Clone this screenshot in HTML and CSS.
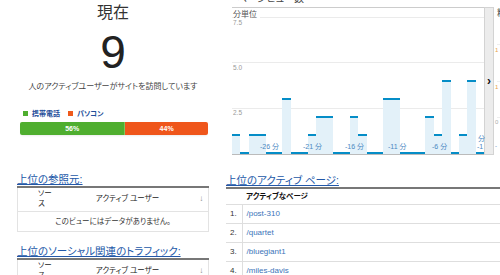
FILE: index.html
```html
<!DOCTYPE html>
<html lang="ja">
<head>
  <meta charset="utf-8">
  <title>リアルタイム - サマリー</title>
  <link rel="stylesheet" href="styles.css">
</head>
<body>
  <div class="page">
    <section class="overview">
      <h1 class="now-title">現在</h1>
      <div class="now-count">9</div>
      <p class="now-text">人のアクティブユーザーがサイトを訪問しています</p>
      <ul class="legend">
        <li><span class="swatch mobile"></span>携帯電話</li>
        <li><span class="swatch desktop"></span>パソコン</li>
      </ul>
      <div class="split">
        <div class="split-part mobile" style="width: 56%">56%</div>
        <div class="split-part desktop" style="width: 44%">44%</div>
      </div>

      <h2 class="block-title"><a>上位の参照元:</a></h2>
      <table class="grid">
        <thead>
          <tr><th class="col-src">ソース</th><th class="col-users">アクティブ ユーザー</th><th class="col-sort">↓</th></tr>
        </thead>
        <tbody>
          <tr><td colspan="3" class="empty">このビューにはデータがありません。</td></tr>
        </tbody>
      </table>

      <h2 class="block-title social"><a>上位のソーシャル関連のトラフィック:</a></h2>
      <table class="grid">
        <thead>
          <tr><th class="col-src">ソース</th><th class="col-users">アクティブ ユーザー</th><th class="col-sort">↓</th></tr>
        </thead>
      </table>
    </section>

    <section class="realtime">
      <div class="chart-title">ページビュー数</div>
      <div class="chart-box">
        <div class="plot">
          <div class="gridline" style="top: 9px"></div>
          <div class="gridline" style="top: 54px"></div>
          <div class="gridline" style="top: 100px"></div>
          <div class="bars">
            <div class="bar" style="height: 20px"></div>
            <div class="bar" style="height: 2px"></div>
            <div class="bar" style="height: 20px"></div>
            <div class="bar" style="height: 20px"></div>
            <div class="bar" style="height: 2px"></div>
            <div class="bar" style="height: 2px"></div>
            <div class="bar" style="height: 56px"></div>
            <div class="bar" style="height: 2px"></div>
            <div class="bar" style="height: 2px"></div>
            <div class="bar" style="height: 20px"></div>
            <div class="bar" style="height: 38px"></div>
            <div class="bar" style="height: 38px"></div>
            <div class="bar" style="height: 2px"></div>
            <div class="bar" style="height: 2px"></div>
            <div class="bar" style="height: 38px"></div>
            <div class="bar" style="height: 20px"></div>
            <div class="bar" style="height: 2px"></div>
            <div class="bar" style="height: 2px"></div>
            <div class="bar" style="height: 56px"></div>
            <div class="bar" style="height: 56px"></div>
            <div class="bar" style="height: 2px"></div>
            <div class="bar" style="height: 2px"></div>
            <div class="bar" style="height: 2px"></div>
            <div class="bar" style="height: 38px"></div>
            <div class="bar" style="height: 20px"></div>
            <div class="bar" style="height: 74px"></div>
            <div class="bar" style="height: 2px"></div>
            <div class="bar" style="height: 20px"></div>
            <div class="bar" style="height: 74px"></div>
            <div class="bar" style="height: 2px"></div>
          </div>
          <span class="unit">分単位</span>
          <span class="axis" style="top: 10px">7.5</span>
          <span class="axis" style="top: 55px">5.0</span>
          <span class="axis" style="top: 100px">2.5</span>
          <span class="tick" style="left: 28px">-26 分</span>
          <span class="tick" style="left: 71px">-21 分</span>
          <span class="tick" style="left: 113px">-16 分</span>
          <span class="tick" style="left: 156px">-11 分</span>
          <span class="tick" style="left: 200px">-6 分</span>
          <span class="tick tick-up" style="left: 246px">分</span>
          <span class="tick" style="left: 245px">-1</span>
        </div>
        <div class="pager">›</div>
        <div class="side">
          <span class="side-title">精</span>
          <div class="side-line" style="top: 37px"></div>
          <div class="side-line" style="top: 74px"></div>
          <div class="side-line" style="top: 110px"></div>
          <span class="side-num warm" style="top: 39px">1</span>
          <span class="side-num warm" style="top: 76px">1</span>
          <span class="side-num" style="top: 111px">0</span>
          <span class="side-num cool" style="top: 135px">-</span>
        </div>
      </div>

      <h2 class="block-title pages-title"><a>上位のアクティブ ページ:</a></h2>
      <table class="pages">
        <thead>
          <tr><th class="num"></th><th class="path">アクティブなページ</th></tr>
        </thead>
        <tbody>
          <tr><td class="num">1.</td><td class="path"><a>/post-310</a></td></tr>
          <tr><td class="num">2.</td><td class="path"><a>/quartet</a></td></tr>
          <tr><td class="num">3.</td><td class="path"><a>/bluegiant1</a></td></tr>
          <tr><td class="num">4.</td><td class="path"><a>/miles-davis</a></td></tr>
        </tbody>
      </table>
    </section>
  </div>
</body>
</html>
```

FILE: styles.css
```css
* {
  box-sizing: border-box;
}

body {
  margin: 0;
  width: 500px;
  height: 275px;
  overflow: hidden;
  background: #fff;
  color: #333;
  font: 9px/1.2 "Liberation Sans", "Noto Sans CJK JP", sans-serif;
  font-feature-settings: "palt";
}

.page {
  display: flex;
  height: 275px;
}

/* left column */

.overview {
  flex: none;
  width: 226px;
  padding: 0 17px;
}

.now-title {
  margin: 3px 0 0;
  font-size: 16px;
  line-height: 20px;
  font-weight: normal;
  text-align: center;
  color: #333;
}

.now-count {
  margin-top: 6px;
  font: 46px/46px "Liberation Sans", sans-serif;
  text-align: center;
  color: #222;
}

.now-text {
  margin: 6px 0 0;
  font-size: 8px;
  line-height: 11px;
  text-align: center;
  color: #444;
}

.legend {
  display: flex;
  gap: 8px;
  margin: 17px 0 0;
  padding: 0 0 0 6px;
  list-style: none;
  font-size: 7px;
  line-height: 9px;
  font-weight: bold;
  color: #1f4f9a;
}

.legend li {
  display: flex;
  align-items: center;
}

.swatch {
  width: 5px;
  height: 5px;
  margin-right: 4px;
}

.swatch.mobile {
  background: #4fae2f;
}

.swatch.desktop {
  background: #ef5a1c;
}

.split {
  display: flex;
  height: 13px;
  margin: 4px 1px 0 3px;
  border-radius: 2px;
  overflow: hidden;
  box-shadow: 0 2px 2px -1px rgba(0, 0, 0, 0.08);
}

.split-part {
  color: #fff;
  font-size: 7px;
  line-height: 13px;
  font-weight: bold;
  text-align: center;
}

.split-part.mobile {
  background: #4fae2f;
  border-right: 1px solid #7cc65f;
}

.split-part.desktop {
  background: #ef561b;
}

.block-title {
  margin: 37px 0 0;
  font-size: 10.5px;
  line-height: 14px;
  font-weight: normal;
}

.block-title a {
  color: #2358a8;
  text-decoration: underline;
}

.block-title.social {
  margin-top: 12px;
}

.grid {
  width: 100%;
  border-collapse: collapse;
  border-top: 2px solid #777;
}

.grid th,
.grid td {
  border: 1px solid #e3e3e3;
  border-top: none;
  font-size: 7.5px;
  font-weight: normal;
  color: #222;
}

.grid th {
  height: 24px;
  line-height: 10px;
}

.grid th.col-src {
  width: 43px;
  padding: 0 7px 0 20px;
  text-align: left;
  border-right: none;
}

.grid th.col-users {
  text-align: center;
  border-left: none;
  border-right: none;
}

.grid th.col-sort {
  width: 14px;
  color: #888;
  font-size: 8px;
  border-left: none;
}

.grid td.empty {
  height: 20px;
  text-align: center;
  color: #333;
}

/* right column */

.realtime {
  flex: none;
  width: 300px;
}

.chart-title {
  margin-top: -7px;
  padding-left: 11px;
  font-size: 10px;
  line-height: 12px;
  color: #444;
}

.chart-box {
  display: flex;
  margin: 2px 0 0 6px;
}

.plot {
  position: relative;
  width: 252px;
  height: 148px;
  border-top: 1px solid #ccc;
  border-bottom: 1px solid #bbb;
}

.gridline {
  position: absolute;
  left: 0;
  right: 0;
  height: 1px;
  background: #ebebeb;
}

.bars {
  position: relative;
  display: flex;
  align-items: flex-end;
  height: 100%;
}

.bar {
  flex: 1;
  background: #e3f1f9;
  border-top: 2px solid #058dc7;
}

.unit {
  position: absolute;
  left: 1px;
  top: 2px;
  padding-right: 3px;
  background: #fff;
  font-size: 8px;
  line-height: 10px;
  color: #555;
}

.axis {
  position: absolute;
  left: 1px;
  font-size: 6.5px;
  line-height: 9px;
  color: #999;
}

.tick {
  position: absolute;
  top: 134px;
  font-size: 7px;
  line-height: 9px;
  color: #4a87c2;
  white-space: nowrap;
}

.tick-up {
  top: 126px;
}

.pager {
  display: flex;
  align-items: center;
  justify-content: center;
  width: 10px;
  height: 148px;
  background: #ececec;
  border: 1px solid #d3d3d3;
  font-size: 12px;
  font-weight: bold;
  color: #111;
}

.side {
  position: relative;
  width: 30px;
  height: 148px;
}

.side-title {
  position: absolute;
  left: 3px;
  top: 1px;
  font-size: 9px;
  line-height: 11px;
  color: #555;
}

.side-line {
  position: absolute;
  left: 3px;
  right: 0;
  height: 1px;
  background: #eee;
}

.side-num {
  position: absolute;
  left: 1px;
  font-size: 6px;
  line-height: 8px;
  color: #aaa;
}

.side-num.warm {
  color: #e8a34e;
}

.side-num.cool {
  color: #4a87c2;
}

.block-title.pages-title {
  margin-top: 18px;
}

.pages {
  width: 290px;
  border-collapse: collapse;
  border-top: 2px solid #777;
}

.pages th,
.pages td {
  padding: 0 0 0 4px;
  text-align: left;
  border-bottom: 1px solid #dedede;
}

.pages th {
  height: 16px;
  font-size: 7.5px;
  font-weight: bold;
  color: #111;
}

.pages td {
  height: 19px;
  font-size: 8px;
  color: #333;
}

.pages .num {
  width: 16px;
  border-right: 1px solid #dedede;
}

.pages th.num {
  border-right: none;
}

.pages td.path a {
  color: #3b74b9;
}
```
